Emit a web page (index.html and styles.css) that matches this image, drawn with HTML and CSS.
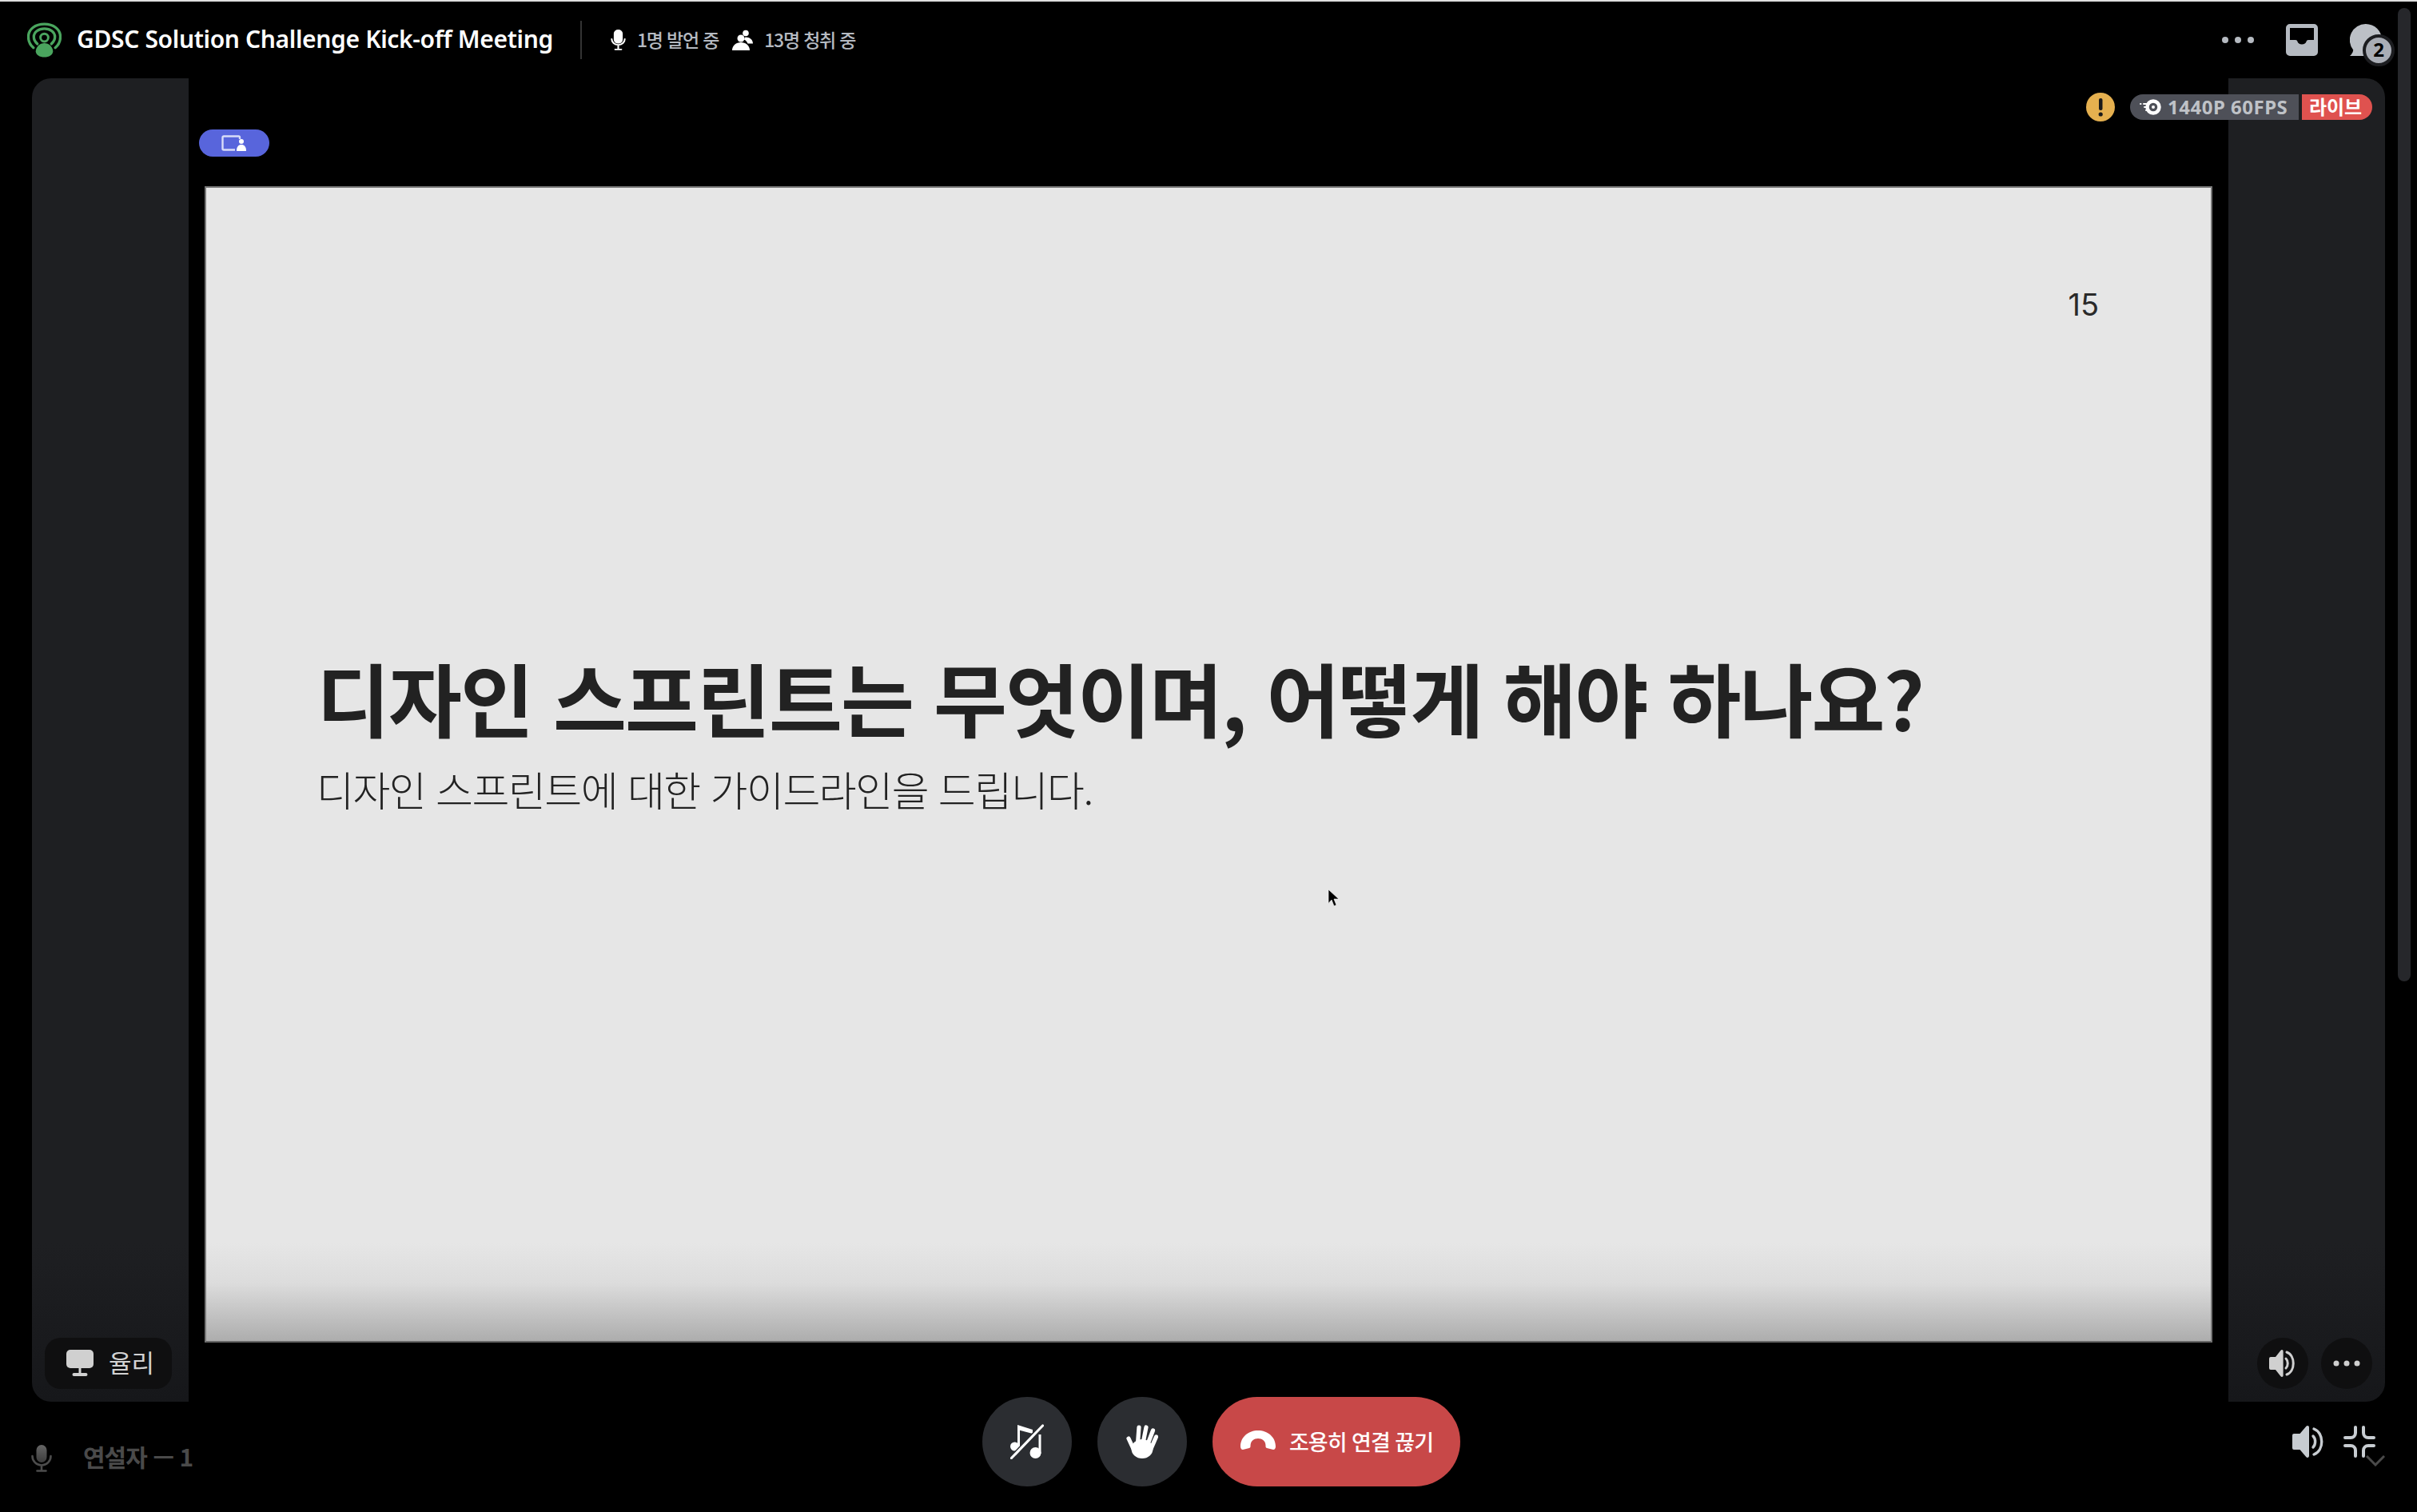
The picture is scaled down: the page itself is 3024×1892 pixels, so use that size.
FILE: index.html
```html
<!DOCTYPE html>
<html lang="ko">
<head>
<meta charset="utf-8">
<title>GDSC Solution Challenge Kick-off Meeting</title>
<link rel="stylesheet" href="styles.css">
</head>
<body>
<div class="app">
  <header class="topbar">
    <svg class="stage-icon" viewBox="0 0 44 44"><g fill="none" stroke="#4aa55e" stroke-linecap="round"><path stroke-width="3.400" d="M8 32C2 27 1.500 20 1.500 18 1.500 8 10.500 1.700 22 1.700S42.500 8 42.500 18c0 2-.5 9-6.500 14"/><path stroke-width="3.400" d="M13 27c-3-2.500-4.500-5.500-4.500-9C8.500 12 14.500 7.500 22 7.500S35.500 12 35.500 18c0 3.500-1.500 6.500-4.500 9"/></g><circle cx="22" cy="19" r="5" fill="none" stroke="#4aa55e" stroke-width="3"/><path fill="#4aa55e" d="M22 26c6 0 11 5 11 10.500 0 4.500-5 7.500-11 7.500s-11-3-11-7.500C11 31 16 26 22 26Z"/></svg>
    <h1 class="title">GDSC Solution Challenge Kick-off Meeting</h1>
    <span class="divider"></span>
    <svg class="mic-icon" viewBox="0 0 22 34" preserveAspectRatio="none"><path fill="#fff" d="M11 0a6.500 6.500 0 0 0-6.500 6.500v10a6.500 6.500 0 0 0 13 0v-10A6.500 6.500 0 0 0 11 0Z"/><path fill="none" stroke="#fff" stroke-width="2.400" stroke-linecap="round" d="M1.500 15.500a9.500 9.500 0 0 0 19 0M11 25v7.500M6.500 32.500h9"/></svg>
    <span class="stat">1명 발언 중</span>
    <svg class="people-icon" viewBox="0 0 28 26"><circle cx="17" cy="4.500" r="3.800" fill="#fff"/><path fill="#fff" d="M17 9.500c5 0 9 3 9 8h-6.500c-1-2.500-2.500-4-4.500-5 .3-1.500 1-3 2-3Z"/><circle cx="11" cy="11" r="4.500" fill="#fff"/><path fill="#fff" d="M11 16c6 0 11 4 11 10H0c0-6 5-10 11-10Z"/></svg>
    <span class="stat">13명 청취 중</span>
    <div class="top-actions">
      <svg class="dots" viewBox="0 0 40 8"><circle cx="4" cy="4" r="4"/><circle cx="20" cy="4" r="4"/><circle cx="36" cy="4" r="4"/></svg>
      <svg class="inbox" viewBox="0 0 40 40"><path fill="#b5bac1" fill-rule="evenodd" d="M5 0h30a5 5 0 0 1 5 5v30a5 5 0 0 1-5 5H5a5 5 0 0 1-5-5V5a5 5 0 0 1 5-5Zm0 5v15h7c1.500 0 2 .7 2.500 2 .6 2 2.500 3.500 5.500 3.500s4.900-1.500 5.500-3.500c.5-1.300 1-2 2.500-2h7V5H5Z"/></svg>
      <div class="thread">
        <svg class="thread-bubble" viewBox="0 0 40 40"><path fill="#bcc0c6" d="M20 0a20 20 0 0 1 0 40H0c-.5 0 3.500-2 4.200-7.500A20 20 0 0 1 20 0Z"/></svg>
        <span class="thread-badge">2</span>
      </div>
    </div>
  </header>

  <main class="stage">
    <section class="tile tile-left">
      <div class="name-tag">
        <svg class="monitor" viewBox="0 0 34 34"><path fill="#d0d0d0" d="M5 0h24a5 5 0 0 1 5 5v13a5 5 0 0 1-5 5H5a5 5 0 0 1-5-5V5a5 5 0 0 1 5-5Z"/><path fill="#d0d0d0" d="M15.500 23h3v6h6a2 2 0 0 1 0 4h-15a2 2 0 0 1 0-4h6Z"/></svg>
        <span class="name-text">율리</span>
      </div>
    </section>

    <section class="screen">
      <div class="slide">
        <div class="page-no">15</div>
        <h2 class="slide-title">디자인 스프린트는 무엇이며, 어떻게 해야 하나요?</h2>
        <p class="slide-sub">디자인 스프린트에 대한 가이드라인을 드립니다.</p>
      </div>
      <svg class="cursor" viewBox="0 0 16 24" preserveAspectRatio="none"><path fill="#000" stroke="#fff" stroke-width=".6" d="M1 1v16l4-4 3 7 3-1-3-7h6Z"/></svg>
      <div class="share-pill">
        <svg viewBox="0 0 32 20"><path fill="none" stroke="#d8dcf8" stroke-width="2.400" d="M23 5V3a1.500 1.500 0 0 0-1.500-1.500H3A1.500 1.500 0 0 0 1.500 3v14A1.500 1.500 0 0 0 3 18.500h14"/><circle cx="25" cy="8" r="3" fill="#fff"/><path fill="#fff" d="M25 12c3.500 0 6 2.500 6 7.500a.5.5 0 0 1-.5.5h-11a.5.5 0 0 1-.5-.5c0-5 2.500-7.500 6-7.500Z"/></svg>
      </div>
      <div class="stream-info">
        <svg class="warn" viewBox="0 0 36 36"><circle cx="18" cy="18" r="18" fill="#e5b04f"/><rect x="16" y="7" width="4.500" height="15" rx="2" fill="#1a1a1a"/><circle cx="18.200" cy="27" r="2.600" fill="#1a1a1a"/></svg>
        <div class="quality">
          <svg class="nitro" viewBox="0 0 28 20"><circle cx="17" cy="10" r="7.500" fill="none" stroke="#fff" stroke-width="4.500"/><circle cx="17" cy="10" r="2" fill="#fff"/><path stroke="#fff" stroke-width="2" stroke-linecap="round" d="M1 6h.5M5 6h6M6 10h3M8 14h3"/></svg>
          <span>1440P 60FPS</span>
        </div>
        <div class="live">라이브</div>
      </div>
    </section>

    <section class="tile tile-right">
      <div class="tile-actions">
        <span class="round-mini">
          <svg class="speaker-sm" viewBox="0 0 34 34"><path fill="#d0d0d0" d="M16 0c1 0 1.600.7 1.600 2v30c0 1.300-.6 2-1.600 2-.6 0-1-.3-1.500-.8L8 25H2a2 2 0 0 1-2-2V11a2 2 0 0 1 2-2h6l6.500-8.200C15 .3 15.400 0 16 0Z"/><path fill="none" stroke="#d0d0d0" stroke-width="3" stroke-linecap="round" d="M21 11c3 3 3 9 0 12M22 3c11 4 11 24 0 28"/></svg>
        </span>
        <span class="round-mini">
          <svg class="dots-sm" viewBox="0 0 34 8"><circle cx="4" cy="4" r="3.500"/><circle cx="17" cy="4" r="3.500"/><circle cx="30" cy="4" r="3.500"/></svg>
        </span>
      </div>
    </section>
  </main>

  <footer class="controls">
    <div class="speakers">
      <svg class="speaker-mic" viewBox="0 0 26 34"><defs><linearGradient id="mg" x1="0" y1="0" x2="0" y2="1"><stop offset="0" stop-color="#666"/><stop offset="1" stop-color="#3c3c3c"/></linearGradient></defs><path fill="url(#mg)" d="M13 0a6.500 6.500 0 0 0-6.500 6.500v9a6.500 6.500 0 0 0 13 0v-9A6.500 6.500 0 0 0 13 0Z"/><path fill="none" stroke="#4c4c4c" stroke-width="2.600" stroke-linecap="round" d="M1.500 14a11.500 11.500 0 0 0 23 0M13 26v6.500M7.500 32.500h11"/></svg>
      <span class="speakers-text">연설자 — 1</span>
    </div>
    <div class="center-actions">
      <button class="round-btn">
        <svg class="music-off" viewBox="0 0 42 44"><rect x="9" y="2" width="3" height="28" fill="#fff"/><path fill="#fff" d="M9 1l19 6v5L9 7Z"/><circle cx="5.500" cy="28" r="5.500" fill="#fff"/><rect x="35.500" y="13" width="3" height="24" fill="#fff"/><circle cx="31.500" cy="36" r="7" fill="#fff"/><path fill="none" stroke="#2b2d31" stroke-width="6" d="M41 1 1 43"/><path fill="none" stroke="#fff" stroke-width="3.200" stroke-linecap="round" d="M40.500 2 1.500 42.500"/></svg>
      </button>
      <button class="round-btn">
        <svg class="hand" viewBox="0 0 40 42"><g fill="none" stroke="#fff" stroke-width="5.200" stroke-linecap="round"><path d="M3 17l6 13"/><path d="M16 3l-1.500 20"/><path d="M25 3l-4 20"/><path d="M33.500 7 27 24"/><path d="M37.500 15 31 30"/></g><ellipse cx="20" cy="30" rx="13.500" ry="12" fill="#fff"/></svg>
      </button>
      <button class="leave-btn">
        <svg viewBox="0 0 44 24"><path fill="#fff" d="M22 0C10 0 0 8 0 20c0 2 1 4 3 4l8-2c1.500-.5 1.500-1.500 1.500-3C12.500 13 17 10 22 10s9.500 3 9.500 9c0 1.500 0 2.500 1.500 3l8 2c2 0 3-2 3-4C44 8 34 0 22 0Z"/></svg>
        <span class="leave-text">조용히 연결 끊기</span>
      </button>
    </div>
    <div class="right-actions">
      <svg class="speaker" viewBox="0 0 40 40"><path fill="#c7ccd1" d="M19 0c1.200 0 2 .8 2 2.400v35.200c0 1.600-.8 2.400-2 2.400-.7 0-1.300-.3-1.800-.9L9.500 30H2a2 2 0 0 1-2-2V12a2 2 0 0 1 2-2h7.500l7.700-9.100C17.700.3 18.300 0 19 0Z"/><path fill="none" stroke="#c7ccd1" stroke-width="3.400" stroke-linecap="round" d="M26 13c3.500 3.500 3.500 10.500 0 14M27 4c13 5 13 27 0 32"/></svg>
      <div class="collapse-wrap">
        <svg class="collapse" viewBox="0 0 40 40"><path fill="none" stroke="#c7ccd1" stroke-width="4" stroke-linecap="round" d="M15 2v7a6 6 0 0 1-6 6H2M25 2v7a6 6 0 0 0 6 6h7M15 38v-7a6 6 0 0 0-6-6H2M25 38v-7a6 6 0 0 1 6-6h7"/></svg>
        <svg class="chevron" viewBox="0 0 24 14"><path fill="none" stroke="#4a4a4a" stroke-width="3" d="m1 1 11 11L23 1"/></svg>
      </div>
    </div>
  </footer>
  <div class="scrollbar"></div>
</div>
</body>
</html>
```

FILE: styles.css
```css
* { box-sizing: border-box; }
html, body { margin: 0; padding: 0; background: #000; }
body { width: 3024px; height: 1892px; overflow: hidden; font-family: "Noto Sans", "Noto Sans CJK KR", sans-serif; }
svg { display: block; flex: none; }
.app { position: relative; width: 3024px; height: 1892px; display: flex; flex-direction: column; border-top: 2px solid #dedede; background: #000; }

.topbar { height: 96px; display: flex; align-items: center; padding: 0 44px 0 34px; flex: none; }
.stage-icon { width: 43px; height: 44px; margin-right: 19px; }
.title { margin: -3px 0 0; font-size: 30px; line-height: 40px; font-weight: 600; color: #fff; letter-spacing: -.35px; white-space: nowrap; }
.divider { width: 2px; height: 48px; background: #333; margin: 0 36px 0 34px; }
.mic-icon { width: 19px; height: 26px; margin-right: 14px; }
.people-icon { width: 28px; height: 26px; margin-right: 12px; }
.stat { font-family: "Noto Sans CJK KR", sans-serif; font-size: 23px; font-weight: 500; color: #b5bac1; letter-spacing: -1.2px; margin: -3px 17px 0 0; white-space: nowrap; }
.top-actions { margin-left: auto; display: flex; align-items: center; }
.dots { width: 40px; height: 8px; fill: #b5bac1; margin-right: 40px; }
.inbox { width: 40px; height: 40px; margin-right: 40px; }
.thread { position: relative; width: 40px; height: 40px; }
.thread-bubble { width: 40px; height: 40px; }
.thread-badge { position: absolute; left: 16px; top: 13px; width: 40px; height: 40px; border-radius: 50%; background: #a9adb5; border: 4px solid #1c1d20; color: #000; font-size: 24px; font-weight: 700; line-height: 30px; text-align: center; }

.stage { flex: none; height: 1656px; display: flex; padding: 0 40px; }
.tile { width: 196px; height: 100%; flex: none; background: linear-gradient(#1e1f22 88%, #16171a); display: flex; align-items: flex-end; }
.tile-left { border-radius: 24px 0 0 24px; padding: 0 0 16px 16px; }
.tile-right { border-radius: 0 24px 24px 0; padding: 0 16px 16px 0; justify-content: flex-end; }
.name-tag { width: 159px; height: 64px; border-radius: 20px; background: #0f0f10; display: flex; align-items: center; gap: 19px; padding-left: 27px; color: #d2d2d2; font-family: "Noto Sans CJK KR", sans-serif; font-size: 31px; }
.name-text { margin-top: -6px; }
.monitor { width: 34px; height: 34px; }
.tile-actions { display: flex; gap: 16px; }
.round-mini { width: 64px; height: 64px; border-radius: 50%; background: #0f0f10; display: flex; align-items: center; justify-content: center; }
.speaker-sm { width: 34px; height: 34px; }
.dots-sm { width: 34px; height: 8px; fill: #cfcfcf; }

.screen { position: relative; flex: 1; padding: 135px 20px 74px; }
.slide { height: 100%; background: linear-gradient(#e6e6e6 91.500%, #dcdcdc 95%, #adadad); border: 2px solid #777; border-bottom-color: #666; padding: 118px 142px 0 138px; display: flex; flex-direction: column; color: #222; font-family: "Noto Sans CJK KR", sans-serif; }
.page-no { align-self: flex-end; font-family: Inter, sans-serif; font-size: 38px; line-height: 56px; color: #2a2a2a; margin-right: -2px; }
.slide-title { margin: 398px 0 0; font-size: 100px; line-height: 130px; font-weight: 700; letter-spacing: -2px; white-space: nowrap; color: #222; }
.slide-sub { margin: 14px 0 0; font-size: 51px; line-height: 72px; font-weight: 300; letter-spacing: -1.500px; white-space: nowrap; color: #222; }
.cursor { position: absolute; left: 1425px; top: 1014px; width: 16px; height: 26px; }
.share-pill { position: absolute; left: 13px; top: 64px; width: 88px; height: 34px; border-radius: 17px; background: #5865dc; display: flex; align-items: center; justify-content: center; }
.share-pill svg { width: 32px; height: 20px; }
.stream-info { position: absolute; right: -180px; top: 18px; display: flex; align-items: center; }
.warn { width: 36px; height: 36px; margin-right: 19px; }
.quality { width: 211px; height: 32px; background: #4e5058; border-radius: 16px 0 0 16px; display: flex; align-items: center; padding-left: 12px; gap: 7px; color: #bfc2c7; font-family: "Noto Sans", sans-serif; font-size: 24px; font-weight: 700; white-space: nowrap; letter-spacing: .5px; }
.quality span { margin-top: -2px; }
.nitro { width: 28px; height: 20px; }
.live { width: 88px; height: 32px; margin-left: 4px; background: #df524f; border-radius: 0 16px 16px 0; color: #fff; font-family: "Noto Sans CJK KR", sans-serif; font-size: 24px; font-weight: 700; line-height: 30px; text-align: center; padding-right: 4px; }

.controls { flex: none; height: 138px; display: grid; grid-template-columns: 1229px auto 1fr; }
.speakers { display: flex; align-items: center; padding: 4px 0 0 39px; gap: 39px; color: #4a4a4a; font-family: "Noto Sans CJK KR", sans-serif; font-size: 30px; font-weight: 700; white-space: nowrap; letter-spacing: -1px; }
.speakers-text { margin-top: -6px; }
.speaker-mic { width: 26px; height: 34px; }
.center-actions { display: flex; align-items: flex-start; gap: 32px; margin-top: -6px; }
.round-btn { width: 112px; height: 112px; border: 0; border-radius: 50%; background: #2b2d31; padding: 0; display: flex; align-items: center; justify-content: center; }
.music-off { width: 42px; height: 44px; }
.hand { width: 40px; height: 42px; }
.leave-btn { width: 310px; height: 112px; border: 0; border-radius: 56px; background: #c84848; padding: 0 0 0 35px; display: flex; align-items: center; gap: 17px; color: #fff; font-family: "Noto Sans CJK KR", sans-serif; font-size: 27px; font-weight: 500; letter-spacing: -1px; white-space: nowrap; }
.leave-btn svg { width: 44px; height: 24px; margin-top: -4px; }
.leave-text { margin-top: -2px; }
.right-actions { display: flex; align-items: flex-start; padding: 30px 0 0 1041px; gap: 24px; }
.speaker { width: 40px; height: 40px; }
.collapse-wrap { position: relative; width: 40px; height: 40px; }
.collapse { width: 40px; height: 40px; }
.chevron { position: absolute; left: 28px; top: 37px; width: 24px; height: 14px; }

.scrollbar { position: absolute; left: 3000px; top: 8px; width: 16px; height: 1218px; border-radius: 8px; background: #26272b; }
```
